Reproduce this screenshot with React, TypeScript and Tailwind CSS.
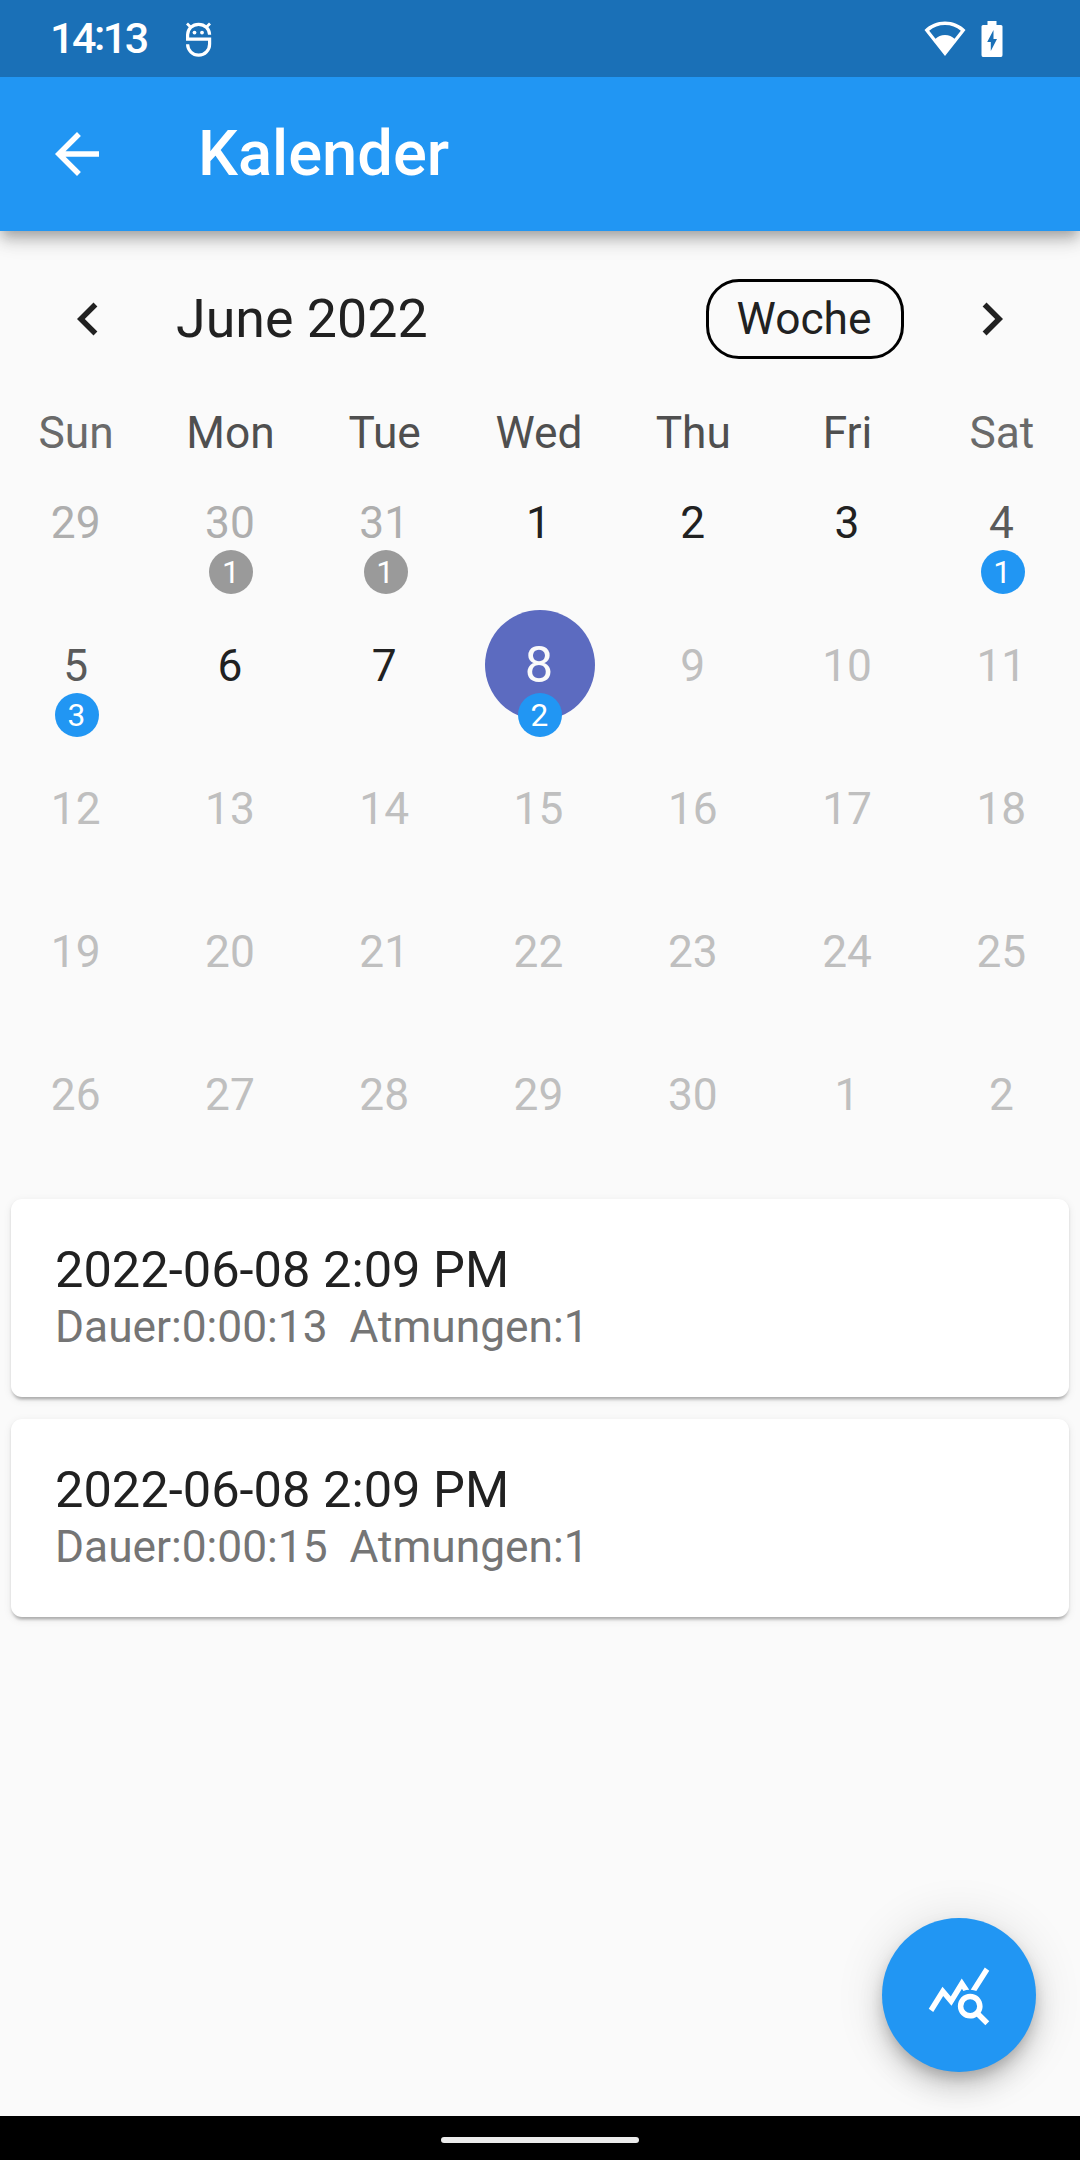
import type { ReactNode } from "react";

type Day = { n: number; tone: string; badge?: number; badgeTone?: string; selected?: boolean };

const out = "text-[#aeaeae]";
const off = "text-[#bfbfbf]";
const dark = "text-[#212121]";
const weekend = "text-[#5a5a5a]";
const blue = "bg-[#2196f3]";
const grey = "bg-[#9a9a9a]";

const disabled = (from: number, to: number): Day[] =>
  Array.from({ length: to - from + 1 }, (_, i) => ({ n: from + i, tone: off }));

const days: Day[] = [
  { n: 29, tone: out },
  { n: 30, tone: out, badge: 1, badgeTone: grey },
  { n: 31, tone: out, badge: 1, badgeTone: grey },
  { n: 1, tone: dark },
  { n: 2, tone: dark },
  { n: 3, tone: dark },
  { n: 4, tone: weekend, badge: 1, badgeTone: blue },
  { n: 5, tone: weekend, badge: 3, badgeTone: blue },
  { n: 6, tone: dark },
  { n: 7, tone: dark },
  { n: 8, tone: "text-[#fafafa]", badge: 2, badgeTone: blue, selected: true },
  ...disabled(9, 30),
  ...disabled(1, 2),
];

const weekdays = ["Sun", "Mon", "Tue", "Wed", "Thu", "Fri", "Sat"];

const sessions = [
  { title: "2022-06-08 2:09 PM", detail: "Dauer:0:00:13  Atmungen:1" },
  { title: "2022-06-08 2:09 PM", detail: "Dauer:0:00:15  Atmungen:1" },
];

function Icon({ children }: { children: ReactNode }) {
  return (
    <svg viewBox="0 0 24 24" className="size-[66px] shrink-0" fill="currentColor">
      {children}
    </svg>
  );
}

function StatusBar() {
  return (
    <div className="relative z-10 flex h-[77px] items-center bg-[#1a70b7] text-white">
      <span className="ml-[50px] w-[134px] text-[43px] leading-[77px] font-medium tracking-[-2.5px]">
        14<span className="relative -top-[3px]">:</span>13
      </span>
      <svg viewBox="0 0 29 38" className="mt-[1px] h-[38px] w-[29px]" fill="none" stroke="white" strokeWidth="3.2">
        <path d="M25.600 14.700A11 10.400 0 0 0 3.600 14.700V19.200H25.600V24A11 11 0 0 1 3.600 24.300" />
        <path d="M3 3.500L7 7.500M26 3.500L22 7.500" strokeWidth="2.800" />
        <circle cx="10.500" cy="12.600" r="1.900" fill="white" stroke="none" />
        <circle cx="18" cy="12.600" r="1.900" fill="white" stroke="none" />
      </svg>
      <svg viewBox="0 0 42 36" className="ml-auto h-[36px] w-[42px]" fill="white">
        <path fillRule="evenodd" d="M21 0.500C13 0.500 6 3.500 0.500 9L21 35L41.500 9C36 3.500 29 0.500 21 0.500ZM21 4C27 4 32.500 6 36.800 9.700L30.500 17.700C28 15.500 25 14 21 14S14 15.500 11.500 17.700L5.200 9.700C9.500 6 15 4 21 4Z" />
      </svg>
      <svg viewBox="0 0 22 36" className="mt-[1px] mr-[77px] ml-[15px] h-[36px] w-[22px]" fill="white">
        <path fillRule="evenodd" d="M6.500 0H15.500V4H20Q21.500 4 21.500 5.500V34Q21.500 36 20 36H2Q0.500 36 0.500 34V5.500Q0.500 4 2 4H6.500ZM12.500 9L6.200 21H9.800V30L16 18H12.500Z" />
      </svg>
    </div>
  );
}

function AppBar() {
  return (
    <header className="relative flex h-[154px] items-center bg-[#2196f3] pl-[44px] text-white shadow-[0_5.5px_11px_-2.75px_rgba(0,0,0,0.2),0_11px_14px_0_rgba(0,0,0,0.14),0_3px_27px_0_rgba(0,0,0,0.12)]">
      <Icon>
        <path d="M20 11H7.830l5.590-5.590L12 4l-8 8 8 8 1.410-1.410L7.830 13H20v-2z" />
      </Icon>
      <h1 className="-mt-[2px] ml-[88px] text-[63.250px] leading-[74px] font-medium">Kalender</h1>
    </header>
  );
}

function DayCell({ day }: { day: Day }) {
  return (
    <div className="relative flex h-[143px] justify-center pt-[16px]">
      {day.selected ? (
        <div className="flex size-[110px] items-center justify-center rounded-full bg-[#5c6bc0] pr-[2px] text-[50.600px]">
          <span className={day.tone}>{day.n}</span>
        </div>
      ) : (
        <div className="flex size-[110px] items-center justify-center pt-[3px] pr-[3px] text-[44.275px]">
          <span className={day.tone}>{day.n}</span>
        </div>
      )}
      {day.badge !== undefined && (
        <div
          className={`absolute top-[99px] left-[55px] flex size-[44px] items-center justify-center rounded-full pt-[2px] pr-[1px] text-[31.625px] leading-none text-white ${day.badgeTone}`}
        >
          {day.badge}
        </div>
      )}
    </div>
  );
}

export default function App() {
  return (
    <div className="relative flex h-[2160px] w-[1080px] flex-col overflow-hidden bg-[#fafafa] font-['Roboto',sans-serif] text-[#212121]">
      <StatusBar />
      <AppBar />

      <section className="flex h-[176px] shrink-0 items-center px-[55px]">
        <Icon>
          <path d="M15.410 7.410L14 6l-6 6 6 6 1.410-1.410L10.830 12z" />
        </Icon>
        <h2 className="ml-[55px] text-[53.760px] leading-[64px]">June 2022</h2>
        <button className="ml-auto h-[80px] w-[198px] rounded-[33px] border-[3px] border-black pr-[2px] text-center text-[44.275px] leading-[74px]">
          Woche
        </button>
        <div className="ml-[55px] flex">
          <Icon>
            <path d="M10 6L8.590 7.410 13.170 12l-4.580 4.590L10 18l6-6z" />
          </Icon>
        </div>
      </section>

      <section className="shrink-0">
        <div className="grid h-[44px] grid-cols-7 text-center text-[44.275px] leading-[52px]">
          {weekdays.map((d, i) => (
            <span key={d} className={i % 6 === 0 ? "pr-[2px] text-[#6a6a6a]" : "pr-[2px] text-[#4f4f4f]"}>
              {d}
            </span>
          ))}
        </div>
        <div className="grid grid-cols-7">
          {days.map((day, i) => (
            <DayCell key={i} day={day} />
          ))}
        </div>
      </section>

      <section className="mt-[33px] flex flex-col gap-[22px] px-[11px]">
        {sessions.map((s, i) => (
          <article
            key={i}
            className="h-[198px] rounded-[11px] bg-white px-[44px] pt-[41px] shadow-[0_5px_2.75px_-3px_rgba(0,0,0,0.16),0_2.75px_2.75px_0_rgba(0,0,0,0.12),0_2.75px_8px_0_rgba(0,0,0,0.08)]"
          >
            <h3 className="text-[50.600px] leading-[59px]">{s.title}</h3>
            <p className="mt-[2px] text-[44.275px] leading-[52px] whitespace-pre text-[#757575]">{s.detail}</p>
          </article>
        ))}
      </section>

      <button className="absolute right-[44px] bottom-[88px] flex size-[154px] items-center justify-center rounded-full bg-[#2196f3] text-white shadow-[0_8px_14px_-2.75px_rgba(0,0,0,0.2),0_16.5px_27px_0_rgba(0,0,0,0.14),0_3px_50px_0_rgba(0,0,0,0.12)]">
        <Icon>
          <path d="M19.88 18.47c.44-.7.7-1.510.7-2.390 0-2.490-2.010-4.500-4.500-4.500s-4.500 2.010-4.500 4.500 2.010 4.500 4.490 4.500c.88 0 1.700-.26 2.390-.7L21.580 23 23 21.580l-3.120-3.110zm-3.800.11a2.500 2.500 0 1 1 0-5 2.500 2.500 0 0 1 0 5zm-.36-8.500c-.74.02-1.450.18-2.100.45l-.55-.83-3.800 6.180-3.010-3.520-3.630 5.810L1 17l5-8 3 3.500L13 6l2.720 4.080zm2.590.5c-.64-.28-1.330-.45-2.050-.49L21.380 2 23 3.180l-4.690 7.400z" />
        </Icon>
      </button>

      <footer className="relative mt-auto flex h-[44px] shrink-0 items-center justify-center bg-black pt-[4px]">
        <div className="h-[6px] w-[198px] rounded-full bg-[#ebebeb]" />
      </footer>
    </div>
  );
}
